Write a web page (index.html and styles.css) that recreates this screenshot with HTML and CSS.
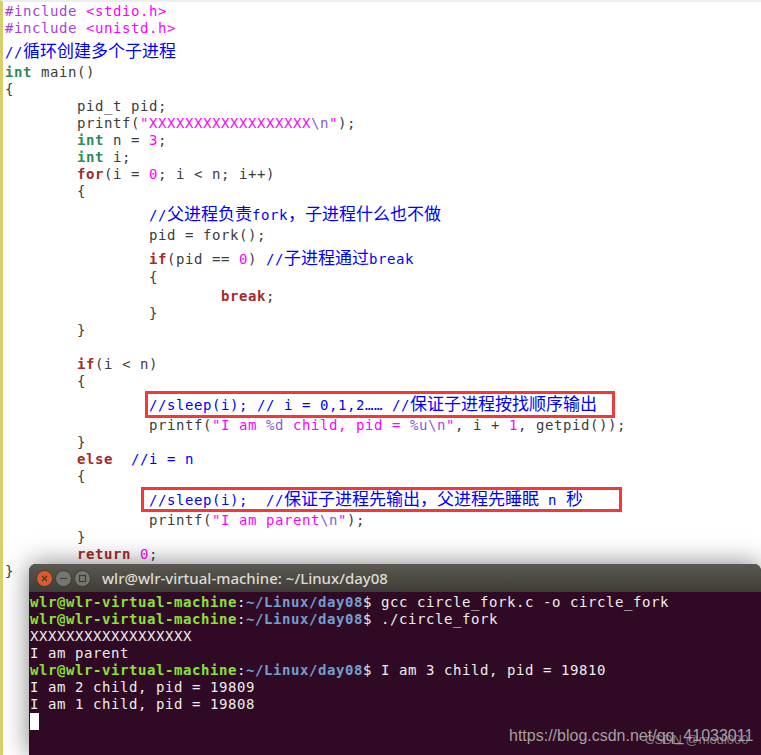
FILE: index.html
```html
<!DOCTYPE html>
<html lang="zh">
<head>
<meta charset="utf-8">
<title>circle_fork</title>
<link rel="stylesheet" href="styles.css">
</head>
<body>
<main class="shot">
  <div class="code">
    <div class="ln"><span class="pre">#include</span> <span class="str">&lt;stdio.h&gt;</span></div>
    <div class="ln"><span class="pre">#include</span> <span class="str">&lt;unistd.h&gt;</span></div>
    <div class="ln t4 b6"><span class="cm">//<span class="zh">循环创建多个子进程</span></span></div>
    <div class="ln"><span class="ty">int</span> main()</div>
    <div class="ln">{</div>
    <div class="ln">	pid_t pid;</div>
    <div class="ln">	printf(<span class="str">"XXXXXXXXXXXXXXXXXX<span class="esc">\n</span>"</span>);</div>
    <div class="ln">	<span class="ty">int</span> n = <span class="str">3</span>;</div>
    <div class="ln">	<span class="ty">int</span> i;</div>
    <div class="ln">	<span class="kw">for</span>(i = <span class="str">0</span>; i &lt; n; i++)</div>
    <div class="ln">	{</div>
    <div class="ln t4 b6">		<span class="cm">//<span class="zh">父进程负责</span>fork<span class="zh">，子进程什么也不做</span></span></div>
    <div class="ln">		pid = fork();</div>
    <div class="ln t4 b4">		<span class="kw">if</span>(pid == <span class="str">0</span>) <span class="cm">//<span class="zh">子进程通过</span>break</span></div>
    <div class="ln b2">		{</div>
    <div class="ln">			<span class="kw">break</span>;</div>
    <div class="ln">		}</div>
    <div class="ln">	}</div>
    <div class="ln"> </div>
    <div class="ln">	<span class="kw">if</span>(i &lt; n)</div>
    <div class="ln">	{</div>
    <div class="ln t4 b6">		<span class="cm">//sleep(i); // i = 0,1,2…… //<span class="zh">保证子进程按找顺序输出</span></span></div>
    <div class="ln">		printf(<span class="str">"I am <span class="esc">%d</span> child, pid = <span class="esc">%u\n</span>"</span>, i + <span class="str">1</span>, getpid());</div>
    <div class="ln">	}</div>
    <div class="ln">	<span class="kw">else</span>  <span class="cm">//i = n</span></div>
    <div class="ln">	{</div>
    <div class="ln t4 b6">		<span class="cm">//sleep(i);  //<span class="zh">保证子进程先输出，父进程先睡眠</span> n <span class="zh">秒</span></span></div>
    <div class="ln">		printf(<span class="str">"I am parent<span class="esc">\n</span>"</span>);</div>
    <div class="ln">	}</div>
    <div class="ln">	<span class="kw">return</span> <span class="str">0</span>;</div>
    <div class="ln">}</div>
  </div>

  <div class="mark mark-a"></div>
  <div class="mark mark-b"></div>

  <section class="term">
    <header class="term-bar">
      <div class="btns">
        <svg class="btn" viewBox="0 0 17 17" aria-hidden="true"><circle class="btn-close" cx="8.500" cy="8.500" r="8"/><path class="glyph" d="M6 6l5 5M11 6l-5 5"/></svg>
        <svg class="btn" viewBox="0 0 17 17" aria-hidden="true"><circle class="btn-min" cx="8.500" cy="8.500" r="8"/><path class="glyph" d="M5 8.500h7"/></svg>
        <svg class="btn" viewBox="0 0 17 17" aria-hidden="true"><circle class="btn-min" cx="8.500" cy="8.500" r="8"/><rect class="glyph" x="5.500" y="5.500" width="6" height="6"/></svg>
      </div>
      <div class="term-title">wlr@wlr-virtual-machine: ~/Linux/day08</div>
    </header>
    <div class="term-body">
      <div class="ln"><span class="host">wlr@wlr-virtual-machine</span>:<span class="path">~/Linux/day08</span>$ gcc circle_fork.c -o circle_fork</div>
      <div class="ln"><span class="host">wlr@wlr-virtual-machine</span>:<span class="path">~/Linux/day08</span>$ ./circle_fork</div>
      <div class="ln">XXXXXXXXXXXXXXXXXX</div>
      <div class="ln">I am parent</div>
      <div class="ln"><span class="host">wlr@wlr-virtual-machine</span>:<span class="path">~/Linux/day08</span>$ I am 3 child, pid = 19810</div>
      <div class="ln">I am 2 child, pid = 19809</div>
      <div class="ln">I am 1 child, pid = 19808</div>
      <div class="cursor"></div>
    </div>
  </section>

  <div class="wm wm-url">https://blog.csdn.net/qq_41033011</div>
  <div class="wm wm-csdn">CSDN @modi000</div>
</main>
</body>
</html>
```

FILE: styles.css
```css
html, body {
  margin: 0;
  padding: 0;
  background: #fff;
}

.shot {
  position: relative;
  width: 761px;
  height: 755px;
  overflow: hidden;
  background: #fff;
  box-sizing: border-box;
  border-left: 3px solid #d9cf6a;
  border-top: 2px solid #eeeeee;
}

.code,
.term-body {
  font-family: "DejaVu Sans Mono", "Noto Sans CJK SC", monospace;
  font-size: 14px;
  letter-spacing: 0.57px;
  tab-size: 8;
}

.code {
  padding: 1px 0 0 2px;
  color: #3c3c3c;
}

.ln {
  height: 17px;
  line-height: 17px;
  white-space: pre;
}

.zh {
  font-family: "Noto Sans CJK SC", sans-serif;
  font-size: 17px;
  letter-spacing: 0;
  line-height: 17px;
}

.t4 { padding-top: 4px; }
.b2 { padding-bottom: 2px; }
.b4 { padding-bottom: 4px; }
.b6 { padding-bottom: 6px; }

.pre { color: #a83fdc; }
.str { color: #ff00ff; }
.esc { color: #8a5ad8; }
.ty  { color: #2e8b57; font-weight: 700; }
.kw  { color: #a52a2a; font-weight: 700; }
.cm  { color: #0000ff; }

.mark {
  position: absolute;
  box-sizing: border-box;
  border: 3px solid #f03a3a;
}
.mark-a { left: 142px; top: 389px; width: 470px; height: 27px; }
.mark-b { left: 138px; top: 485px; width: 481px; height: 25px; }

.term {
  position: absolute;
  left: 26px;
  top: 562px;
  width: 732px;
  height: 191px;
  border-radius: 7px 7px 0 0;
  background: #300a24;
  box-shadow: 0 0 26px rgba(0, 0, 0, 0.5);
  overflow: hidden;
}

.term-bar {
  display: flex;
  align-items: center;
  height: 28px;
  padding-left: 7px;
  gap: 11px;
  background: linear-gradient(#5a5850, #3e3d38);
}

.btns { display: flex; gap: 2px; }
.btn { width: 17px; height: 17px; display: block; }
.btn-close { fill: #e0592a; stroke: #3a3935; stroke-width: 1; }
.btn-min { fill: #77766e; stroke: #3a3935; stroke-width: 1; }
.glyph { fill: none; stroke: #3c3b37; stroke-width: 1.2; }

.term-title {
  font-family: "Noto Sans", "Liberation Sans", sans-serif;
  font-size: 15px;
  line-height: 28px;
  color: #dfdbd2;
  font-weight: 500;
}

.term-body {
  padding: 2px 0 0 1px;
  color: #eeeeec;
}

.host { color: #8ae234; font-weight: 700; }
.path { color: #729fcf; font-weight: 700; }

.cursor {
  width: 9px;
  height: 17px;
  background: #fff;
}

.wm {
  position: absolute;
  font-family: "Liberation Sans", Arial, sans-serif;
  white-space: nowrap;
}
.wm-url {
  left: 506px;
  top: 725px;
  font-size: 16px;
  line-height: 18px;
  color: rgba(190, 190, 190, 0.85);
}
.wm-csdn {
  left: 642px;
  top: 730px;
  font-size: 13px;
  line-height: 16px;
  color: rgba(170, 170, 170, 0.7);
}
```
